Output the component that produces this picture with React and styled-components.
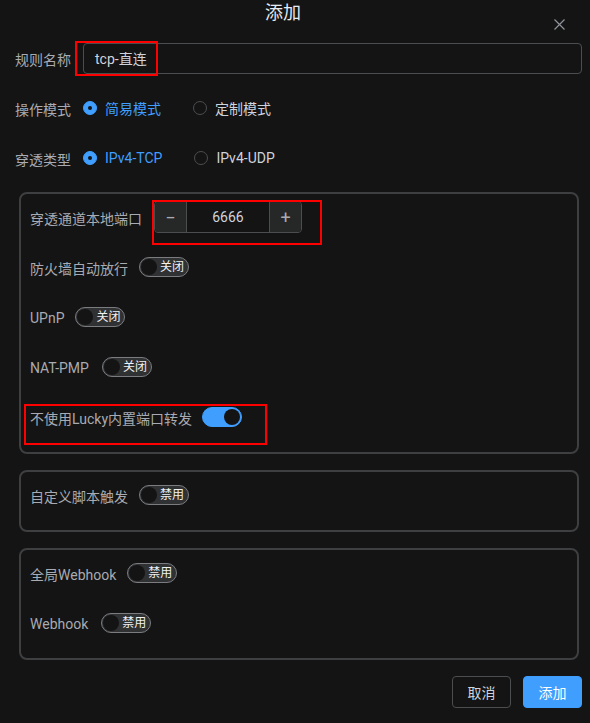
import React from "react";
import styled, { createGlobalStyle } from "styled-components";

const GlobalStyle = createGlobalStyle`
  html, body {
    margin: 0;
    padding: 0;
    background: #141414;
  }
  body {
    font-family: Roboto, "Noto Sans CJK SC", sans-serif;
    font-size: 14px;
    color: #cfd3dc;
  }
`;

const Dialog = styled.div`
  position: relative;
  width: 590px;
  height: 723px;
  box-sizing: border-box;
  padding: 0 8px 0 15px;
  background: #141414;
`;

const Header = styled.div`
  position: relative;
  height: 42px;
  padding: 1px 24px 0 0;
  box-sizing: border-box;
  text-align: center;
  margin-left: -7px;
`;

const Title = styled.span`
  font-size: 18px;
  line-height: 24px;
  color: #e5eaf3;
`;

const Close = styled.button`
  position: absolute;
  right: 15px;
  top: 16px;
  width: 16px;
  height: 16px;
  padding: 0;
  border: none;
  background: none;
  display: flex;
  align-items: center;
  justify-content: center;
`;

const Row = styled.div`
  display: flex;
  align-items: center;
  height: 32px;
  margin-bottom: 18px;
  gap: ${(p) => p.gap || 12}px;
`;

const Label = styled.span`
  color: #a8abb2;
  font-size: 14px;
  white-space: nowrap;
  padding-top: 1px;
`;

const TextInput = styled.div`
  flex: 1;
  height: 31px;
  box-sizing: border-box;
  border: 1px solid #4c4d4f;
  border-radius: 4px;
  display: flex;
  align-items: center;
  padding-left: 11px;
  color: #cfd3dc;
  font-size: 14px;
`;

const RadioGroup = styled.div`
  display: flex;
  align-items: center;
  gap: ${(p) => p.gap || 32}px;
`;

const Radio = styled.label`
  display: flex;
  align-items: center;
  gap: 8px;
  color: ${(p) => (p.checked ? "#409eff" : "#cfd3dc")};
`;

const RadioDot = styled.span`
  width: 14px;
  height: 14px;
  box-sizing: border-box;
  border-radius: 50%;
  border: 1px solid ${(p) => (p.checked ? "#409eff" : "#4c4d4f")};
  background: ${(p) => (p.checked ? "#409eff" : "transparent")};
  display: flex;
  align-items: center;
  justify-content: center;
  &::after {
    content: "";
    width: 4px;
    height: 4px;
    border-radius: 50%;
    background: ${(p) => (p.checked ? "#141414" : "transparent")};
  }
`;

const Panel = styled.div`
  border: 2px solid #3e3f41;
  border-radius: 8px;
  padding: 7px 9px 1px;
  margin: ${(p) => (p.first ? 2 : 0)}px 3px 16px 4px;
`;

const NumberBox = styled.div`
  display: flex;
  width: 148px;
  height: 32px;
  box-sizing: border-box;
  border: 1px solid #4c4d4f;
  border-radius: 4px;
  overflow: hidden;
`;

const Step = styled.span`
  width: 31px;
  background: #262727;
  display: flex;
  align-items: center;
  justify-content: center;
  color: #a8abb2;
  font-size: 18px;
  border-${(p) => p.side}: 1px solid #4c4d4f;
`;

const NumberValue = styled.span`
  flex: 1;
  display: flex;
  align-items: center;
  justify-content: center;
  color: #cfd3dc;
  font-size: 14px;
`;

const Switch = styled.span`
  position: relative;
  display: inline-flex;
  align-items: center;
  width: ${(p) => (p.on ? 40 : 50)}px;
  height: 20px;
  box-sizing: border-box;
  border-radius: 10px;
  border: 1px solid ${(p) => (p.on ? "#409eff" : "#7a7c80")};
  background: ${(p) => (p.on ? "#409eff" : "#303133")};
  justify-content: ${(p) => (p.on ? "flex-end" : "flex-start")};
  padding: 0 1px;
`;

const Knob = styled.span`
  width: 16px;
  height: 16px;
  border-radius: 50%;
  background: #141414;
  flex-shrink: 0;
`;

const SwitchText = styled.span`
  font-size: 12px;
  color: #f2f2f2;
  margin-left: 3px;
  line-height: 16px;
`;

const Footer = styled.div`
  display: flex;
  justify-content: flex-end;
  gap: 12px;
`;

const Button = styled.button`
  width: 59px;
  height: 32px;
  border-radius: 4px;
  font-family: inherit;
  font-size: 14px;
  border: 1px solid ${(p) => (p.primary ? "#409eff" : "#4c4d4f")};
  background: ${(p) => (p.primary ? "#409eff" : "transparent")};
  color: ${(p) => (p.primary ? "#ffffff" : "#cfd3dc")};
`;

const Mark = styled.div`
  position: absolute;
  border: 2px solid #ff0000;
  pointer-events: none;
`;

function Toggle({ on, text }) {
  return (
    <Switch on={on}>
      <Knob />
      {!on && <SwitchText>{text}</SwitchText>}
    </Switch>
  );
}

export default function App() {
  return (
    <>
      <GlobalStyle />
      <Dialog>
        <Header>
          <Title>添加</Title>
          <Close>
            <svg width="11" height="11" viewBox="0 0 11 11">
              <path d="M0.5 0.5 L10.5 10.5 M10.5 0.5 L0.5 10.5" stroke="#909399" strokeWidth="1.2" />
            </svg>
          </Close>
        </Header>

        <Row>
          <Label>规则名称</Label>
          <TextInput>tcp-直连</TextInput>
        </Row>

        <Row>
          <Label>操作模式</Label>
          <RadioGroup>
            <Radio checked>
              <RadioDot checked />
              简易模式
            </Radio>
            <Radio>
              <RadioDot />
              定制模式
            </Radio>
          </RadioGroup>
        </Row>

        <Row>
          <Label>穿透类型</Label>
          <RadioGroup>
            <Radio checked>
              <RadioDot checked />
              IPv4-TCP
            </Radio>
            <Radio>
              <RadioDot />
              IPv4-UDP
            </Radio>
          </RadioGroup>
        </Row>

        <Panel first>
          <Row>
            <Label>穿透通道本地端口</Label>
            <NumberBox>
              <Step side="right">−</Step>
              <NumberValue>6666</NumberValue>
              <Step side="left">+</Step>
            </NumberBox>
          </Row>
          <Row gap={11}>
            <Label>防火墙自动放行</Label>
            <Toggle text="关闭" />
          </Row>
          <Row gap={11}>
            <Label>UPnP</Label>
            <Toggle text="关闭" />
          </Row>
          <Row gap={13}>
            <Label>NAT-PMP</Label>
            <Toggle text="关闭" />
          </Row>
          <Row gap={10}>
            <Label>不使用Lucky内置端口转发</Label>
            <Toggle on />
          </Row>
        </Panel>

        <Panel>
          <Row gap={11}>
            <Label>自定义脚本触发</Label>
            <Toggle text="禁用" />
          </Row>
        </Panel>

        <Panel>
          <Row gap={11}>
            <Label>全局Webhook</Label>
            <Toggle text="禁用" />
          </Row>
          <Row gap={13}>
            <Label>Webhook</Label>
            <Toggle text="禁用" />
          </Row>
        </Panel>

        <Footer>
          <Button>取消</Button>
          <Button primary>添加</Button>
        </Footer>

        <Mark style={{ left: 75, top: 41, width: 79, height: 31 }} />
        <Mark style={{ left: 152, top: 200, width: 166, height: 41 }} />
        <Mark style={{ left: 24, top: 404, width: 239, height: 37 }} />
      </Dialog>
    </>
  );
}
